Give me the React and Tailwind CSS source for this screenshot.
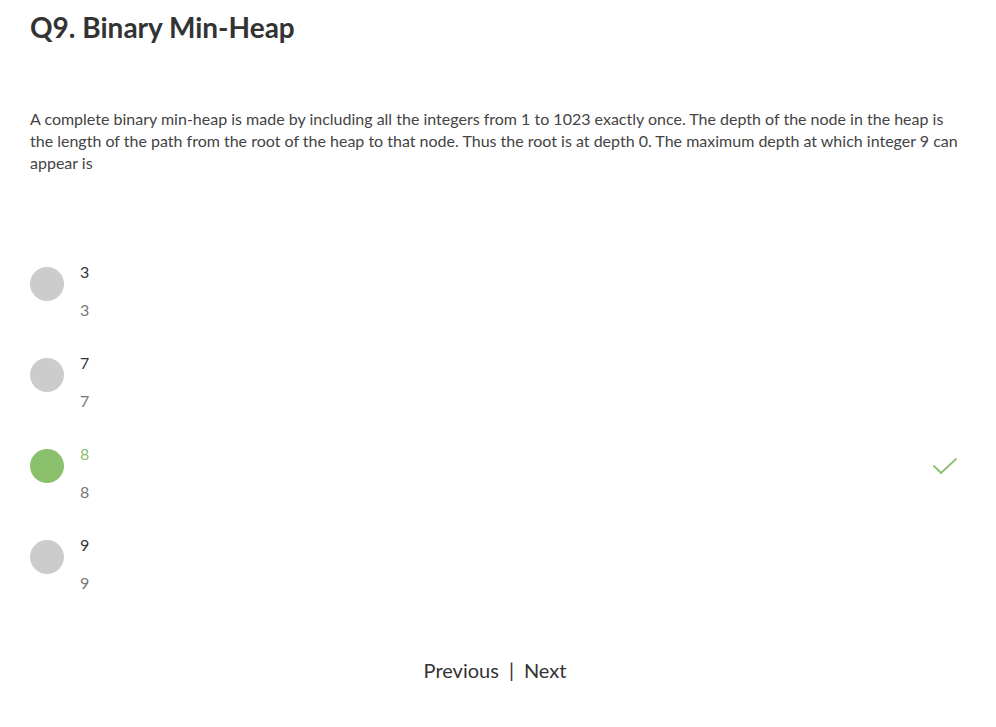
import React from 'react';

const options = [
  { value: '3', correct: false },
  { value: '7', correct: false },
  { value: '8', correct: true },
  { value: '9', correct: false },
];

const CheckMark = () => (
  <svg width="26" height="18" viewBox="0 0 26 18" fill="none">
    <path d="M2 9 L9 16 L24 2" stroke="#8bc16e" strokeWidth="1.8" strokeLinecap="round" strokeLinejoin="round" />
  </svg>
);

const App = () => {
  return (
    <div className="min-h-[727px] bg-white text-[#333] lining-nums font-['Lato','Noto_Sans',sans-serif]">
      <div className="pl-[30px] pr-[36px] pt-[9px]">
        <h1 className="text-[28px] font-bold leading-[36px] text-[#333]">Q9. Binary Min-Heap</h1>

        <p className="mt-[63px] text-[16px] leading-[22px] text-[#444]">
          A complete binary min-heap is made by including all the integers from 1 to 1023 exactly once. The depth of the node in the heap is the length of the path from the root of the heap to that node. Thus the root is at depth 0. The maximum depth at which integer 9 can appear is
        </p>

        <div className="mt-[87px] flex flex-col gap-[31px]">
          {options.map((opt) => (
            <div key={opt.value} className="flex items-start">
              <div className={`mt-[6px] w-[34px] h-[34px] rounded-full shrink-0 ${opt.correct ? 'bg-[#8bc06c]' : 'bg-[#cccccc]'}`} />
              <div className="ml-[16px] flex-1 flex flex-col gap-[16px] text-[16px] leading-[22px]">
                <span className={opt.correct ? 'text-[#8bc06c]' : 'text-[#333]'}>{opt.value}</span>
                <span className="text-[#777]">{opt.value}</span>
              </div>
              {opt.correct && (
                <div className="mt-[14px] mr-[2px]">
                  <CheckMark />
                </div>
              )}
            </div>
          ))}
        </div>

        <div className="mt-[62px] flex justify-center items-center text-[20px] leading-[28px] text-[#333]">
          <span>Previous</span>
          <span className="mx-[10px]">|</span>
          <span>Next</span>
        </div>
      </div>
    </div>
  );
};

export default App;
